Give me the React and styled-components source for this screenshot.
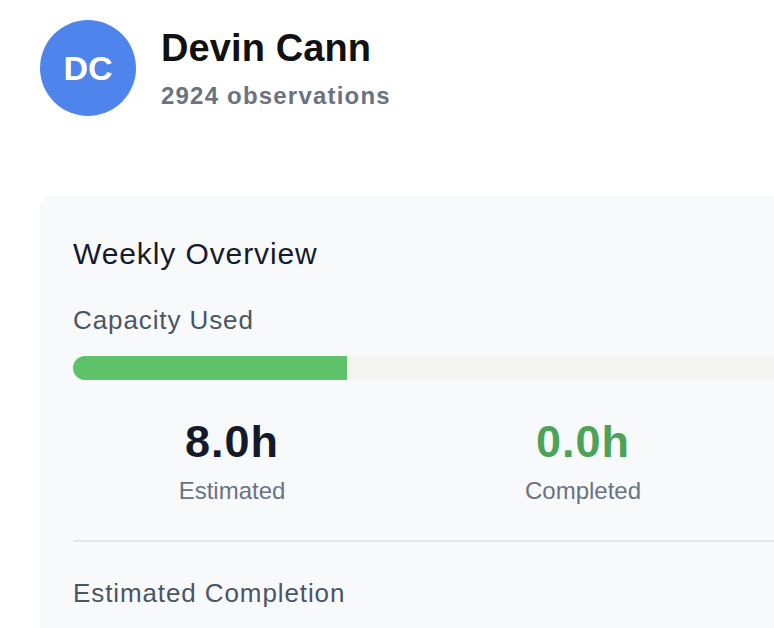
import React from "react";
import styled, { createGlobalStyle } from "styled-components";

const GlobalStyle = createGlobalStyle`
  body {
    margin: 0;
    background: #ffffff;
    font-family: "Liberation Sans", Arial, Helvetica, sans-serif;
    overflow: hidden;
  }
`;

const Page = styled.div`
  width: 900px;
  padding: 20px 0 0 40px;
`;

const Header = styled.header`
  display: flex;
  align-items: flex-start;
  gap: 25px;
`;

const Avatar = styled.div`
  width: 96px;
  height: 96px;
  border-radius: 50%;
  background: #4f84ec;
  color: #ffffff;
  display: flex;
  align-items: center;
  justify-content: center;
  font-size: 34px;
  font-weight: 700;
  flex-shrink: 0;
`;

const NameBlock = styled.div`
  padding-top: 6px;
`;

const Name = styled.h1`
  margin: 0;
  font-size: 38px;
  line-height: 1.2;
  font-weight: 700;
  color: #111111;
  letter-spacing: 0.1px;
`;

const Observations = styled.div`
  margin-top: 10px;
  font-size: 24px;
  line-height: 1.2;
  font-weight: 700;
  color: #6b7280;
  letter-spacing: 1.2px;
`;

const Card = styled.section`
  margin-top: 80px;
  width: 820px;
  background: #f8f9fb;
  border-radius: 12px;
  padding: 40px 33px;
  box-sizing: border-box;
`;

const CardTitle = styled.h2`
  margin: 0;
  font-size: 30px;
  line-height: 1.2;
  font-weight: 400;
  color: #161c2b;
  letter-spacing: 0.9px;
`;

const Label = styled.div`
  margin-top: ${(p) => p.$top}px;
  font-size: 26px;
  line-height: 1.2;
  color: #4b5563;
  letter-spacing: 0.9px;
`;

const Track = styled.div`
  margin-top: 20px;
  height: 24px;
  border-radius: 12px;
  background: #f3f3f1;
  overflow: hidden;
`;

const Fill = styled.div`
  height: 100%;
  background: #5dc26a;
`;

const Stats = styled.div`
  display: grid;
  grid-template-columns: repeat(2, 318px);
  gap: 33px;
  margin-top: 35px;
  padding-bottom: 34px;
  border-bottom: 2px solid #e6e7ea;
`;

const Stat = styled.div`
  display: flex;
  flex-direction: column;
  align-items: center;
  gap: 8px;
`;

const StatValue = styled.div`
  font-size: 45px;
  line-height: 1.2;
  font-weight: 700;
  letter-spacing: 1px;
  color: ${(p) => p.$color};
`;

const StatLabel = styled.div`
  font-size: 24px;
  line-height: 1.2;
  color: #6b7280;
`;

const stats = [
  { value: "8.0h", label: "Estimated", color: "#141a29" },
  { value: "0.0h", label: "Completed", color: "#4ca257" },
];

export default function App() {
  const used = 8.0;
  const capacity = 22.0;
  return (
    <Page>
      <GlobalStyle />
      <Header>
        <Avatar>DC</Avatar>
        <NameBlock>
          <Name>Devin Cann</Name>
          <Observations>2924 observations</Observations>
        </NameBlock>
      </Header>
      <Card>
        <CardTitle>Weekly Overview</CardTitle>
        <Label $top={33}>Capacity Used</Label>
        <Track>
          <Fill style={{ width: `${(used / capacity) * 100}%` }} />
        </Track>
        <Stats>
          {stats.map((s) => (
            <Stat key={s.label}>
              <StatValue $color={s.color}>{s.value}</StatValue>
              <StatLabel>{s.label}</StatLabel>
            </Stat>
          ))}
        </Stats>
        <Label $top={36}>Estimated Completion</Label>
      </Card>
    </Page>
  );
}
